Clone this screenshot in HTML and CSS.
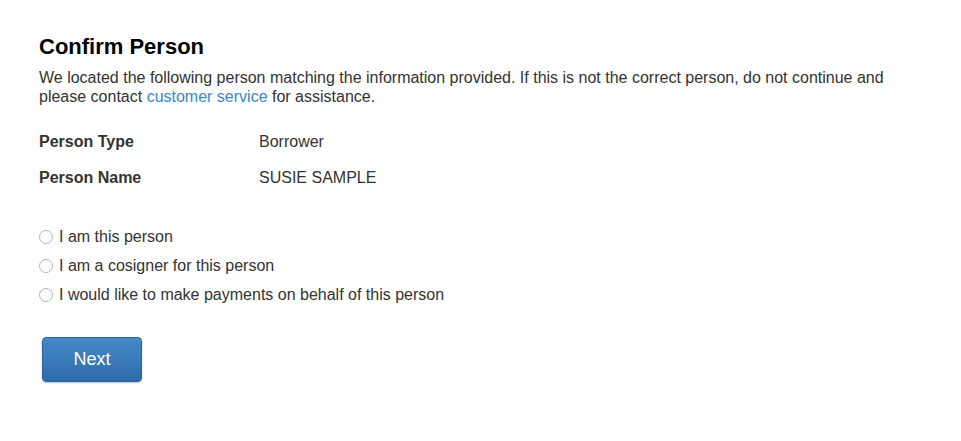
FILE: index.html
```html
<!DOCTYPE html>
<html lang="en">
<head>
<meta charset="utf-8">
<title>Confirm Person</title>
<link rel="stylesheet" href="styles.css">
</head>
<body>
<main class="page">
  <h1 class="title">Confirm Person</h1>
  <p class="intro">We located the following person matching the information provided. If this is not the correct person, do not continue and please contact <a href="#" class="link">customer service</a> for assistance.</p>
  <dl class="details">
    <div class="row"><dt>Person Type</dt><dd>Borrower</dd></div>
    <div class="row"><dt>Person Name</dt><dd>SUSIE SAMPLE</dd></div>
  </dl>
  <div class="options">
    <label class="option"><span class="radio"></span><span>I am this person</span></label>
    <label class="option"><span class="radio"></span><span>I am a cosigner for this person</span></label>
    <label class="option"><span class="radio"></span><span>I would like to make payments on behalf of this person</span></label>
  </div>
  <div class="actions">
    <button class="btn" type="button">Next</button>
  </div>
</main>
</body>
</html>
```
FILE: styles.css
```css
html, body {
  margin: 0;
  padding: 0;
  background: #fff;
}
body {
  font-family: "Liberation Sans", Arial, Helvetica, sans-serif;
  color: #333;
  font-size: 16px;
}
.page {
  padding: 34px 39px 40px 39px;
  width: 870px;
}
.title {
  margin: 0;
  font-size: 22px;
  font-weight: bold;
  color: #000;
  line-height: 26px;
}
.intro {
  margin: 8px 0 0 0;
  line-height: 19px;
}
.link {
  color: #3a87c8;
  text-decoration: none;
}
.details {
  margin: 26px 0 0 0;
  display: flex;
  flex-direction: column;
  gap: 17px;
}
.row {
  display: flex;
  line-height: 19px;
}
.row dt {
  width: 220px;
  font-weight: bold;
}
.row dd {
  margin: 0;
}
.options {
  margin-top: 40px;
  display: flex;
  flex-direction: column;
  gap: 10px;
}
.option {
  display: flex;
  align-items: center;
  gap: 6px;
  line-height: 19px;
}
.radio {
  width: 12px;
  height: 12px;
  border: 1px solid #b5b5b5;
  border-radius: 50%;
  background: #fff;
  box-sizing: content-box;
}
.actions {
  margin-top: 33px;
  padding-left: 3px;
}
.btn {
  width: 100px;
  height: 45px;
  border: 1px solid #2b659f;
  border-radius: 4px;
  background: linear-gradient(#4589c9, #2e6cab);
  color: #fff;
  font-family: "Liberation Sans", Arial, Helvetica, sans-serif;
  font-size: 18px;
  box-shadow: 0 1px 2px rgba(0,0,0,0.25);
  cursor: pointer;
}
```
